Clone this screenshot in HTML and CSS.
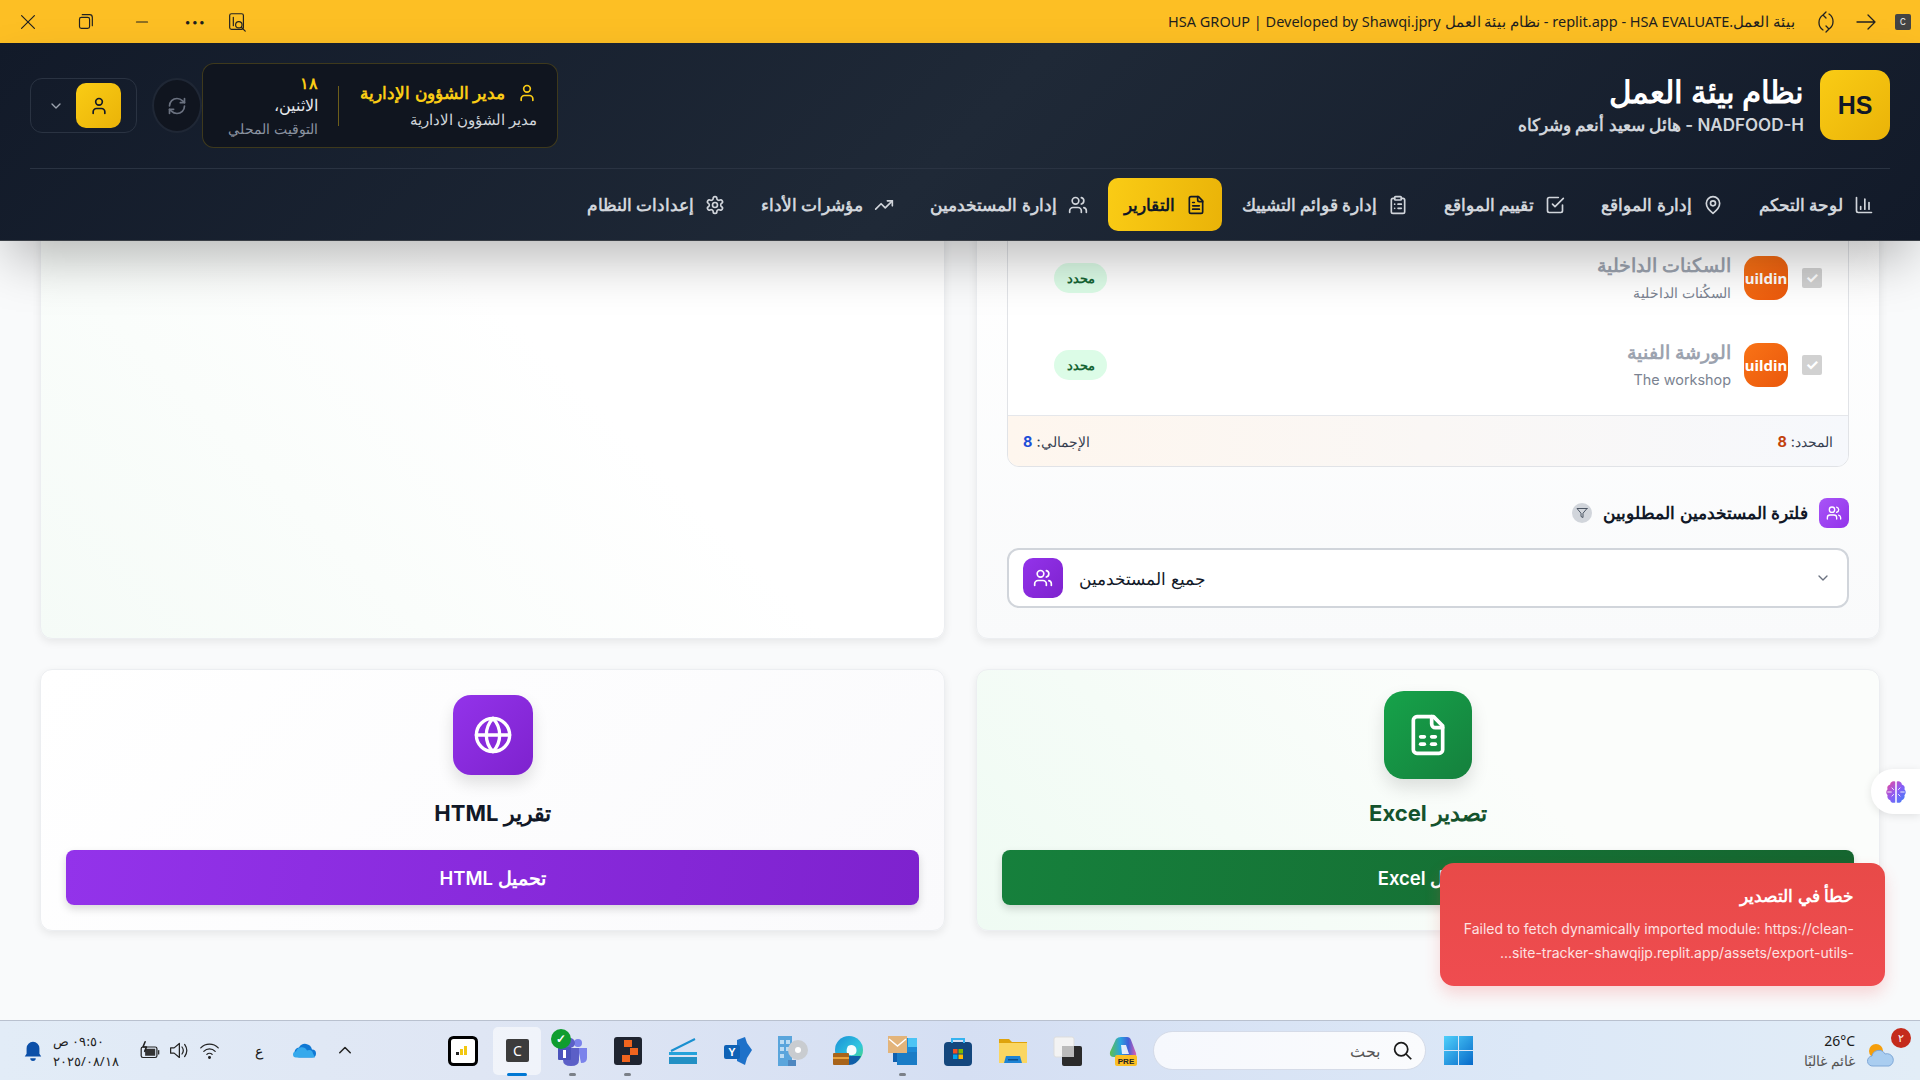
FILE: index.html
```html
<!DOCTYPE html>
<html lang="ar" dir="rtl">
<head>
    <meta charset="UTF-8">
    <title>نظام بيئة العمل</title>
    <link rel="stylesheet" href="styles.css">
</head>
<body>
    <svg class="sprite" xmlns="http://www.w3.org/2000/svg">
        <symbol id="i-chart" viewBox="0 0 24 24"><path d="M3 3v16a2 2 0 0 0 2 2h16"/><path d="M18 17V9"/><path d="M13 17V5"/><path d="M8 17v-3"/></symbol>
        <symbol id="i-pin" viewBox="0 0 24 24"><path d="M20 10c0 6-8 12-8 12s-8-6-8-12a8 8 0 0 1 16 0Z"/><circle cx="12" cy="10" r="3"/></symbol>
        <symbol id="i-check" viewBox="0 0 24 24"><path d="m9 11 3 3L22 4"/><path d="M21 12v7a2 2 0 0 1-2 2H5a2 2 0 0 1-2-2V5a2 2 0 0 1 2-2h11"/></symbol>
        <symbol id="i-clipboard" viewBox="0 0 24 24"><rect x="8" y="2" width="8" height="4" rx="1"/><path d="M16 4h2a2 2 0 0 1 2 2v14a2 2 0 0 1-2 2H6a2 2 0 0 1-2-2V6a2 2 0 0 1 2-2h2"/><path d="M12 11h4"/><path d="M12 16h4"/><path d="M8 11h.01"/><path d="M8 16h.01"/></symbol>
        <symbol id="i-file" viewBox="0 0 24 24"><path d="M15 2H6a2 2 0 0 0-2 2v16a2 2 0 0 0 2 2h12a2 2 0 0 0 2-2V7Z"/><path d="M14 2v4a2 2 0 0 0 2 2h4"/><path d="M10 9H8"/><path d="M16 13H8"/><path d="M16 17H8"/></symbol>
        <symbol id="i-users" viewBox="0 0 24 24"><path d="M16 21v-2a4 4 0 0 0-4-4H6a4 4 0 0 0-4 4v2"/><circle cx="9" cy="7" r="4"/><path d="M22 21v-2a4 4 0 0 0-3-3.87"/><path d="M16 3.13a4 4 0 0 1 0 7.75"/></symbol>
        <symbol id="i-trend" viewBox="0 0 24 24"><polyline points="22 7 13.5 15.5 8.5 10.5 2 17"/><polyline points="16 7 22 7 22 13"/></symbol>
        <symbol id="i-gear" viewBox="0 0 24 24"><path d="M12.22 2h-.44a2 2 0 0 0-2 2v.18a2 2 0 0 1-1 1.73l-.43.25a2 2 0 0 1-2 0l-.15-.08a2 2 0 0 0-2.73.73l-.22.38a2 2 0 0 0 .73 2.73l.15.1a2 2 0 0 1 1 1.72v.51a2 2 0 0 1-1 1.74l-.15.09a2 2 0 0 0-.73 2.73l.22.38a2 2 0 0 0 2.73.73l.15-.08a2 2 0 0 1 2 0l.43.25a2 2 0 0 1 1 1.73V20a2 2 0 0 0 2 2h.44a2 2 0 0 0 2-2v-.18a2 2 0 0 1 1-1.73l.43-.25a2 2 0 0 1 2 0l.15.08a2 2 0 0 0 2.73-.73l.22-.39a2 2 0 0 0-.73-2.73l-.15-.08a2 2 0 0 1-1-1.74v-.5a2 2 0 0 1 1-1.74l.15-.09a2 2 0 0 0 .73-2.73l-.22-.38a2 2 0 0 0-2.73-.73l-.15.08a2 2 0 0 1-2 0l-.43-.25a2 2 0 0 1-1-1.73V4a2 2 0 0 0-2-2z"/><circle cx="12" cy="12" r="3"/></symbol>
        <symbol id="i-user" viewBox="0 0 24 24"><path d="M19 21v-2a4 4 0 0 0-4-4H9a4 4 0 0 0-4 4v2"/><circle cx="12" cy="7" r="4"/></symbol>
        <symbol id="i-refresh" viewBox="0 0 24 24"><path d="M3 12a9 9 0 0 1 9-9 9.75 9.75 0 0 1 6.74 2.74L21 8"/><path d="M21 3v5h-5"/><path d="M21 12a9 9 0 0 1-9 9 9.75 9.75 0 0 1-6.74-2.74L3 16"/><path d="M8 16H3v5"/></symbol>
        <symbol id="i-chevron" viewBox="0 0 24 24"><path d="m6 9 6 6 6-6"/></symbol>
        <symbol id="i-sheet" viewBox="0 0 24 24"><path d="M15 2H6a2 2 0 0 0-2 2v16a2 2 0 0 0 2 2h12a2 2 0 0 0 2-2V7Z"/><path d="M14 2v4a2 2 0 0 0 2 2h4"/><path d="M8 13h2"/><path d="M14 13h2"/><path d="M8 17h2"/><path d="M14 17h2"/></symbol>
        <symbol id="i-globe" viewBox="0 0 24 24"><circle cx="12" cy="12" r="10"/><path d="M12 2a14.5 14.5 0 0 0 0 20 14.5 14.5 0 0 0 0-20"/><path d="M2 12h20"/></symbol>
        <symbol id="i-funnel" viewBox="0 0 24 24"><polygon points="22 3 2 3 10 12.46 10 19 14 21 14 12.46 22 3"/></symbol>
    </svg>

    <!-- browser window bar -->
    <div class="titlebar">
        <span class="tab-icon">c</span>
        <svg class="tb-icon" viewBox="0 0 24 24"><path d="M3 12h18M14 5l7 7-7 7"/></svg>
        <svg class="tb-icon tb-reload" viewBox="0 0 24 24"><path d="M9 5a9 9 0 0 0 0 15M15 19a9 9 0 0 0 0-15M12 2 9 5l3 3M12 22l3-3-3-3"/></svg>
        <span class="tb-title">HSA GROUP | Developed by Shawqi.jpry نظام بيئة العمل - replit.app - HSA EVALUATE.بيئة العمل</span>
        <div class="tb-controls">
            <svg class="tb-icon" viewBox="0 0 24 24"><rect x="4" y="3" width="15" height="17" rx="2"/><path d="M8 7v9"/><circle cx="14" cy="15" r="3.5"/><path d="m17 18 4 4"/></svg>
            <span class="tb-dots">&#8226;&#8226;&#8226;</span>
            <svg class="tb-icon" viewBox="0 0 24 24"><path d="M6 12h12"/></svg>
            <svg class="tb-icon" viewBox="0 0 24 24"><rect x="6" y="7" width="11" height="12" rx="2"/><path d="M9 4h8a3 3 0 0 1 3 3v9"/></svg>
            <svg class="tb-icon" viewBox="0 0 24 24"><path d="m5 5 14 14M19 5 5 19"/></svg>
        </div>
    </div>

    <header class="app-header">
        <div class="header-top">
            <div class="brand">
                <div class="brand-logo">HS</div>
                <div class="brand-text">
                    <h1>نظام بيئة العمل</h1>
                    <p>NADFOOD-H - هائل سعيد أنعم وشركاه</p>
                </div>
            </div>
            <div class="header-tools">
                <div class="info-box">
                    <div class="info-user">
                        <div class="info-name"><svg class="ico ico-20"><use href="#i-user"/></svg><span>مدير الشؤون الإدارية</span></div>
                        <div class="info-role">مدير الشؤون الادارية</div>
                    </div>
                    <div class="info-date">
                        <span class="date-num">١٨</span>
                        <span class="date-day">الاثنين،</span>
                        <span class="date-zone">التوقيت المحلي</span>
                    </div>
                </div>
                <div class="refresh-btn"><svg class="ico ico-20"><use href="#i-refresh"/></svg></div>
                <div class="user-chip">
                    <div class="user-btn"><svg class="ico ico-20"><use href="#i-user"/></svg></div>
                    <svg class="ico ico-16 chip-chevron"><use href="#i-chevron"/></svg>
                </div>
            </div>
        </div>
        <nav class="main-nav">
            <a class="nav-item"><svg class="ico ico-20"><use href="#i-chart"/></svg><span>لوحة التحكم</span></a>
            <a class="nav-item"><svg class="ico ico-20"><use href="#i-pin"/></svg><span>إدارة المواقع</span></a>
            <a class="nav-item"><svg class="ico ico-20"><use href="#i-check"/></svg><span>تقييم المواقع</span></a>
            <a class="nav-item"><svg class="ico ico-20"><use href="#i-clipboard"/></svg><span>إدارة قوائم التشييك</span></a>
            <a class="nav-item active"><svg class="ico ico-20"><use href="#i-file"/></svg><span>التقارير</span></a>
            <a class="nav-item"><svg class="ico ico-20"><use href="#i-users"/></svg><span>إدارة المستخدمين</span></a>
            <a class="nav-item"><svg class="ico ico-20"><use href="#i-trend"/></svg><span>مؤشرات الأداء</span></a>
            <a class="nav-item"><svg class="ico ico-20"><use href="#i-gear"/></svg><span>إعدادات النظام</span></a>
        </nav>
    </header>

    <main class="page">
        <div class="card-grid">
            <section class="card filter-card">
                <div class="list-box">
                    <div class="list-rows">
                        <div class="list-row">
                            <span class="row-check">&#10003;</span>
                            <div class="row-avatar">uildin</div>
                            <div class="row-text">
                                <div class="row-title">السكنات الداخلية</div>
                                <div class="row-sub">السكُنات الداخلية</div>
                            </div>
                            <span class="row-badge">محدد</span>
                        </div>
                        <div class="list-row">
                            <span class="row-check">&#10003;</span>
                            <div class="row-avatar">uildin</div>
                            <div class="row-text">
                                <div class="row-title">الورشة الفنية</div>
                                <div class="row-sub">The workshop</div>
                            </div>
                            <span class="row-badge">محدد</span>
                        </div>
                    </div>
                    <div class="list-summary">
                        <span>المحدد: <b class="num-red">8</b></span>
                        <span>الإجمالي: <b class="num-blue">8</b></span>
                    </div>
                </div>
                <div class="section-head">
                    <span class="section-icon"><svg class="ico ico-16"><use href="#i-users"/></svg></span>
                    <h3>فلترة المستخدمين المطلوبين</h3>
                    <span class="funnel"><svg class="ico ico-12"><use href="#i-funnel"/></svg></span>
                </div>
                <div class="select-box">
                    <svg class="ico ico-16 select-chevron"><use href="#i-chevron"/></svg>
                    <span class="select-label">جميع المستخدمين</span>
                    <span class="select-icon"><svg class="ico ico-20"><use href="#i-users"/></svg></span>
                </div>
            </section>
            <section class="card preview-card"></section>

            <section class="card export-card excel">
                <div class="export-icon"><svg class="ico ico-40"><use href="#i-sheet"/></svg></div>
                <h2>تصدير Excel</h2>
                <button class="export-btn">تحميل Excel</button>
            </section>
            <section class="card export-card html">
                <div class="export-icon"><svg class="ico ico-40"><use href="#i-globe"/></svg></div>
                <h2>تقرير HTML</h2>
                <button class="export-btn">تحميل HTML</button>
            </section>
        </div>
    </main>

    <div class="toast">
        <div class="toast-title">خطأ في التصدير</div>
        <div class="toast-body">Failed to fetch dynamically imported module: https://clean-<br>...site-tracker-shawqijp.replit.app/assets/export-utils-</div>
    </div>

    <div class="brain-tab">
        <svg viewBox="0 0 24 24" width="26" height="26">
            <defs><linearGradient id="brain" x1="0" y1="0" x2="1" y2="1"><stop offset="0" stop-color="#ec4899"/><stop offset=".5" stop-color="#8b5cf6"/><stop offset="1" stop-color="#3b82f6"/></linearGradient></defs>
            <path fill="url(#brain)" d="M11.3 2.5C9 1.5 6.8 3 6.6 5 4.5 5.4 3.4 7.6 4.2 9.5 2.6 11 2.6 13.5 4.2 15c-.7 2 .5 4.100 2.500 4.500.4 2.100 2.700 3.200 4.600 2.100ZM12.700 2.500c2.300-1 4.500.5 4.700 2.500 2.100.4 3.200 2.600 2.400 4.500 1.600 1.500 1.600 4 0 5.500.7 2-.5 4.100-2.500 4.500-.4 2.100-2.700 3.200-4.600 2.100Z"/>
            <path fill="none" stroke="#fff" stroke-width=".8" d="M4 12h4M8 8l2 2M8 16l2-2M20 12h-4M16 8l-2 2M16 16l-2-2"/>
        </svg>
    </div>

    <!-- windows taskbar, mirrored for the arabic locale -->
    <footer class="taskbar">
        <div class="tray-weather">
            <span class="weather-badge">٢</span>
            <svg class="weather-icon" viewBox="0 0 32 26"><circle cx="12" cy="9" r="7" fill="#f59e0b"/><path fill="#a9cdf0" stroke="#7fa8d8" d="M9 24a5 5 0 0 1-1-10 7 7 0 0 1 13-2 6 6 0 0 1 4 12Z"/></svg>
            <div class="weather-text">
                <span>26°C</span>
                <span class="weather-sub">غائم غالبًا</span>
            </div>
        </div>
        <svg class="start-icon" viewBox="0 0 29 29">
            <defs><linearGradient id="win" x1="0" y1="0" x2="1" y2="1"><stop offset="0" stop-color="#4fd0fb"/><stop offset="1" stop-color="#0669c9"/></linearGradient></defs>
            <path fill="url(#win)" d="M0 0h14v14H0zM15 0h14v14H15zM0 15h14v14H0zM15 15h14v14H15z"/>
        </svg>
        <div class="search-box">
            <svg class="search-glass" viewBox="0 0 24 24"><circle cx="10.500" cy="10.500" r="7.500"/><path d="m16 16 6 6"/></svg>
            <span>بحث</span>
        </div>
        <div class="app-icons">
            <div class="app-cell"><svg viewBox="0 0 30 30"><defs><linearGradient id="cop" x1="0" y1="0" x2="1" y2="0"><stop offset="0" stop-color="#5fc04a"/><stop offset=".4" stop-color="#2aa4e0"/><stop offset=".7" stop-color="#3f5fd8"/><stop offset="1" stop-color="#e05fb0"/></linearGradient></defs><path fill="url(#cop)" d="M8 3q2-2 5-2h6q3 0 4 3l5 13q1 4-3 4H6q-5 0-4-5Z"/><path fill="#fff" d="M13 9h5l3 9h-7Z" opacity=".85"/><rect x="7" y="19" width="22" height="11" rx="2" fill="#fbbf24"/><text x="18" y="28" class="pre-label">PRE</text></svg></div>
            <div class="app-cell"><svg viewBox="0 0 30 30"><rect x="1" y="1" width="20" height="20" rx="2" fill="#f3f3f3" stroke="#ddd"/><rect x="9" y="10" width="20" height="20" rx="2" fill="#2b2b2b"/><rect x="9" y="10" width="12" height="11" fill="#bbb"/></svg></div>
            <div class="app-cell"><svg viewBox="0 0 30 30"><path fill="#dfa30c" d="M1 3h10l3 3h15v6H1z"/><path fill="#fbd661" d="M1 7h28v20H1z"/><path fill="#1d83d4" d="M6 27l2-7h14l2 7z"/><path fill="#0d4f8a" d="M10 23h10v1.500H10z"/></svg></div>
            <div class="app-cell"><svg viewBox="0 0 30 30"><rect x="1" y="6" width="28" height="24" rx="4" fill="#14477d"/><path fill="none" stroke="#35b3f0" stroke-width="2" d="M9 7V3h12v4"/><path fill="#f25022" d="M10 13h4.500v4.500H10z"/><path fill="#7fba00" d="M15.500 13H20v4.500h-4.500z"/><path fill="#00a4ef" d="M10 18.500h4.500V23H10z"/><path fill="#ffb900" d="M15.500 18.500H20V23h-4.500z"/></svg></div>
            <div class="app-cell"><svg viewBox="0 0 30 30"><rect x="11" y="2" width="18" height="26" fill="#1d8ad6"/><rect x="20" y="2" width="9" height="9" fill="#4cc4f5"/><rect x="5" y="12" width="14" height="14" fill="#0f5fae"/><path fill="#1a7cc6" d="M9 16h20v13H9z"/><rect x="0" y="0" width="19" height="17" fill="#e3b47a"/><path fill="none" stroke="#fff" stroke-width="1.500" d="M1 3l8.500 7L18 3"/></svg><span class="run-dot"></span></div>
            <div class="app-cell"><svg viewBox="0 0 30 30"><defs><linearGradient id="edge" x1="0" y1="0" x2="1" y2="1"><stop offset="0" stop-color="#1b8fd6"/><stop offset=".6" stop-color="#2fc5e0"/><stop offset="1" stop-color="#4cd964"/></linearGradient></defs><circle cx="16" cy="14" r="14" fill="url(#edge)"/><path fill="#fff" d="M15 10c6-3 10 2 8 7-2 3-7 3-9 0-1-3 0-5 1-7z" opacity=".95"/><path fill="#0f5ea8" d="M4 20h24q-4 9-12 9-8 0-12-9z"/><rect x="0" y="17" width="16" height="12" rx="1" fill="#a8641b"/><path fill="#e9a23b" d="M0 21h16v2H0z"/></svg></div>
            <div class="app-cell"><svg viewBox="0 0 30 30"><rect x="0" y="0" width="14" height="30" fill="#5aa5dc"/><path fill="#bcdcf3" d="M2 4h4v4H2zM8 4h4v4H8zM2 11h4v4H2zM8 11h4v4H8zM2 18h4v4H2z"/><circle cx="20" cy="14" r="10" fill="#c9ccd0"/><circle cx="20" cy="14" r="3" fill="#fff"/><path fill="#4e87c0" d="M10 24h8v6h-8z"/></svg></div>
            <div class="app-cell"><svg viewBox="0 0 30 30"><path fill="#1e71c9" d="M14 4 22 1l2 6 5 7-5 8-2 7-8-4Z"/><rect x="1" y="9" width="16" height="14" rx="2" fill="#0f62b6"/><text x="9" y="20" class="yam-label">Y</text></svg></div>
            <div class="app-cell"><svg viewBox="0 0 30 30"><path fill="none" stroke="#1a90d0" stroke-width="2" d="M3 15 27 3"/><path fill="#24a2da" d="M1 16h28v3H1z"/><path fill="#2390c4" d="M1 21h28v7H1z"/></svg></div>
            <div class="app-cell"><svg viewBox="0 0 30 30"><rect x="1" y="1" width="28" height="28" rx="3" fill="#1f2430"/><path fill="#f0641e" d="M11 4h8v7h-8zM17 12h8v7h-8zM9 19h8v7H9z"/></svg><span class="run-dot"></span></div>
            <div class="app-cell"><svg viewBox="0 0 30 30"><circle cx="20" cy="7" r="4" fill="#7b83eb"/><circle cx="12" cy="7" r="5" fill="#5b5fc7"/><path fill="#7b83eb" d="M20 12h9v10q0 5-6 5z"/><path fill="#5b5fc7" d="M5 12h16v12q0 6-8 6-8 0-8-6z"/><rect x="0" y="11" width="13" height="13" rx="1" fill="#4b53bc"/><path fill="#fff" d="M5 14h3v8H5z"/></svg><span class="check-badge">&#10003;</span><span class="run-dot"></span></div>
            <div class="app-cell current"><span class="c-tile">C</span><span class="run-bar"></span></div>
            <div class="app-cell"><svg viewBox="0 0 30 30"><rect x="1.500" y="1.500" width="27" height="27" rx="4" fill="#fff" stroke="#000" stroke-width="3"/><path fill="#f2c811" d="M16 10h3v9h-3zM12 13h3v6h-3z"/><path fill="#222" d="M8 16h3v3H8z"/></svg></div>
        </div>
        <div class="tray">
            <svg class="tray-icon tray-chevron" viewBox="0 0 24 24"><path d="m5 15 7-7 7 7"/></svg>
            <svg class="tray-icon tray-cloud" viewBox="0 0 24 16"><path fill="#0f78d4" d="M7 15a5 5 0 0 1-1-10 7 7 0 0 1 13 2 4 4 0 0 1 0 8Z"/><path fill="#36a9ec" d="M3 15a3 3 0 0 1 0-6 6 6 0 0 1 11-1 4 4 0 0 1 6 3l2 4Z"/></svg>
            <span class="tray-lang">ع</span>
            <svg class="tray-icon tray-wifi" viewBox="0 0 24 24"><path d="M2 9a14 14 0 0 1 20 0M5.500 13a9 9 0 0 1 13 0M9 16.500a4 4 0 0 1 6 0"/><circle cx="12" cy="20" r="1" fill="#222"/></svg>
            <svg class="tray-icon tray-sound" viewBox="0 0 24 24"><path d="M3 9h4l6-5v16l-6-5H3zM16 8q3 4 0 8M19 5q5 7 0 14"/></svg>
            <svg class="tray-icon tray-battery" viewBox="0 0 24 24"><rect x="2.500" y="8" width="18" height="12" rx="2"/><rect x="7" y="10" width="11.500" height="8" fill="#333" stroke="none"/><path d="M22.500 12v4"/><path d="M7 2 4.500 8h4l-2 5" stroke-width="1.800"/></svg>
            <div class="clock">
                <span>٠٩:٥٠ ص</span>
                <span>٢٠٢٥/٠٨/١٨</span>
            </div>
            <svg class="tray-bell" viewBox="0 0 24 24"><path fill="#0b4fa8" d="M12 2a7 7 0 0 0-7 7v6l-2 3h18l-2-3V9a7 7 0 0 0-7-7ZM9 20a3 3 0 0 0 6 0Z"/></svg>
        </div>
    </footer>
</body>
</html>
```

FILE: styles.css
```css
* {
    box-sizing: border-box;
}

html, body {
    margin: 0;
    padding: 0;
    height: 100%;
}

body {
    width: 1920px;
    height: 1080px;
    overflow: hidden;
    display: flex;
    flex-direction: column;
    position: relative;
    font-family: Inter, sans-serif;
    background-color: #f9fafb;
    color: #111827;
}

.sprite {
    display: none;
}

.ico {
    fill: none;
    stroke: currentColor;
    stroke-width: 2;
    stroke-linecap: round;
    stroke-linejoin: round;
    flex-shrink: 0;
}

.ico-12 { width: 12px; height: 12px; }
.ico-16 { width: 16px; height: 16px; }
.ico-20 { width: 20px; height: 20px; }
.ico-40 { width: 40px; height: 40px; }

/* browser bar */
.titlebar {
    height: 43px;
    flex-shrink: 0;
    display: flex;
    align-items: center;
    background-color: #fdbf24;
    padding: 0 9px 0 17px;
    color: #1f1f1f;
}

.tab-icon {
    width: 16px;
    height: 16px;
    background-color: #444;
    color: #ddd;
    border-radius: 2px;
    font-size: 11px;
    line-height: 15px;
    text-align: center;
    margin-left: 17px;
}

.tb-icon {
    width: 24px;
    height: 24px;
    fill: none;
    stroke: #222;
    stroke-width: 1.3;
    stroke-linecap: round;
    stroke-linejoin: round;
    margin-left: 16px;
}

.tb-reload {
    margin-left: 19px;
}

.tb-title {
    font-family: "Noto Sans", sans-serif;
    font-size: 14.5px;
    line-height: 18px;
    margin-top: -2px;
    white-space: nowrap;
    direction: ltr;
}

.tb-controls {
    margin-right: auto;
    display: flex;
    align-items: center;
    gap: 35px;
}

.tb-controls .tb-icon {
    margin: 0;
    width: 22px;
    height: 22px;
}

.tb-dots {
    font-size: 11px;
    letter-spacing: 1px;
    width: 12px;
    margin-right: -15px;
    margin-left: 6px;
    white-space: nowrap;
}

/* app header */
.app-header {
    height: 198px;
    flex-shrink: 0;
    padding: 0 30px;
    background: linear-gradient(135deg, #121a29 0%, #1f2937 50%, #121a29 100%);
    position: relative;
    z-index: 5;
    box-shadow: 0 25px 50px -8px rgba(0, 0, 0, 0.28);
    border-bottom: 1px solid #3a3f46;
}

.header-top {
    height: 126px;
    padding-top: 20px;
    display: flex;
    justify-content: space-between;
    align-items: flex-start;
    border-bottom: 1px solid #2a3342;
}

.brand {
    display: flex;
    align-items: center;
    gap: 16px;
    padding-top: 7px;
}

.brand-logo {
    width: 70px;
    height: 70px;
    border-radius: 14px;
    background: linear-gradient(135deg, #facc15, #eab308);
    color: #111827;
    font-family: "Liberation Sans", sans-serif;
    font-weight: 700;
    font-size: 25px;
    display: flex;
    align-items: center;
    justify-content: center;
}

.brand-text h1 {
    margin: 0;
    color: #fff;
    font-size: 31px;
    line-height: 40px;
    font-weight: 700;
}

.brand-text p {
    margin: 0;
    color: #d1d5db;
    font-size: 17px;
    line-height: 26px;
    font-weight: 600;
}

.header-tools {
    display: flex;
    align-items: center;
    height: 85px;
}

.info-box {
    width: 356px;
    height: 85px;
    display: flex;
    align-items: center;
    padding: 0 20px;
    border: 1px solid rgba(250, 204, 21, 0.2);
    border-radius: 12px;
    background-color: #10151f;
}

.info-user {
    width: 199px;
    padding-left: 20px;
    border-left: 1px solid rgba(250, 204, 21, 0.4);
    height: 40px;
    display: flex;
    flex-direction: column;
    justify-content: center;
    gap: 3px;
}

.info-name {
    display: flex;
    align-items: center;
    gap: 12px;
    color: #facc15;
    font-size: 17.3px;
    line-height: 26px;
    font-weight: 600;
    white-space: nowrap;
}

.info-role {
    color: #d1d5db;
    font-size: 14.6px;
    line-height: 22px;
    white-space: nowrap;
}

.info-date {
    padding-right: 20px;
    display: flex;
    flex-direction: column;
    gap: 3px;
    font-size: 14.3px;
    line-height: 20px;
    white-space: nowrap;
}

.date-num { color: #facc15; font-weight: 700; font-size: 16px; }
.date-day { color: #e5e7eb; font-size: 15.5px; }
.date-zone { color: #8b93a1; }

.refresh-btn {
    width: 50px;
    height: 55px;
    border-radius: 50%;
    border: 2px solid #1f2735;
    background-color: #10151f;
    color: #6b7280;
    display: flex;
    align-items: center;
    justify-content: center;
    margin-left: 15px;
}

.user-chip {
    width: 107px;
    height: 55px;
    border: 1px solid #2a3342;
    border-radius: 12px;
    display: flex;
    align-items: center;
    padding: 0 15px;
    gap: 12px;
}

.user-btn {
    width: 45px;
    height: 45px;
    border-radius: 10px;
    background: linear-gradient(135deg, #facc15, #eab308);
    color: #111827;
    display: flex;
    align-items: center;
    justify-content: center;
}

.chip-chevron {
    color: #9ca3af;
}

.main-nav {
    display: flex;
    gap: 4px;
    padding-top: 9px;
}

.nav-item {
    height: 53px;
    padding: 0 16px;
    display: flex;
    align-items: center;
    gap: 11px;
    border-radius: 10px;
    color: #d1d5db;
    font-size: 17px;
    font-weight: 600;
    white-space: nowrap;
}

.nav-item.active {
    background: linear-gradient(100deg, #facc15, #eab308);
    color: #111827;
}

/* page body */
.page {
    flex: 1;
    min-height: 0;
    overflow: hidden;
    display: flex;
    flex-direction: column;
    justify-content: flex-end;
    padding: 0 40px 89px 40px;
}

.card-grid {
    display: grid;
    grid-template-columns: 904px 905px;
    column-gap: 31px;
    row-gap: 30px;
}

.card {
    background-color: #fff;
    border: 1px solid #eceef1;
    border-radius: 12px;
    box-shadow: 0 3px 8px rgba(0, 0, 0, 0.08);
}

.filter-card {
    padding: 0 30px 30px;
    background: linear-gradient(180deg, #fff, #f9fafb);
}

.preview-card {
    background: linear-gradient(45deg, #f5fbf7, #fff 60%);
}

.list-box {
    border: 1px solid #e1e3e7;
    border-radius: 0 0 12px 12px;
    overflow: hidden;
}

.list-rows {
    display: flex;
    flex-direction: column;
    gap: 16px;
    padding: 15px 26px 15px 46px;
    background-color: #fff;
}

.list-row {
    height: 71px;
    display: flex;
    align-items: center;
}

.row-check {
    width: 20px;
    height: 20px;
    background-color: #d1d1d1;
    border-radius: 2px;
    color: #fff;
    font-size: 15px;
    font-weight: 700;
    line-height: 20px;
    text-align: center;
    margin-left: 14px;
}

.row-avatar {
    width: 44px;
    height: 44px;
    border-radius: 14px;
    background: linear-gradient(135deg, #f97316, #ea580c);
    color: #fff;
    font-family: "Noto Sans", sans-serif;
    font-size: 15px;
    font-weight: 700;
    display: flex;
    justify-content: center;
    align-items: center;
    margin-left: 13px;
    direction: ltr;
}

.row-text {
    flex: 1;
}

.row-title {
    color: #9ca3af;
    font-size: 19px;
    font-weight: 600;
    line-height: 30px;
}

.row-sub {
    color: #7b8391;
    font-size: 14.4px;
    line-height: 24px;
}

.row-badge {
    width: 53px;
    height: 30px;
    border-radius: 15px;
    background-color: #dcfce7;
    color: #166534;
    font-size: 13px;
    font-weight: 700;
    display: flex;
    align-items: center;
    justify-content: center;
}

.list-summary {
    height: 51px;
    display: flex;
    align-items: center;
    justify-content: space-between;
    padding: 0 15px;
    font-size: 14.4px;
    color: #374151;
    border-top: 1px solid #e5e7eb;
    background: linear-gradient(90deg, #fef6ee, #f6f8fc);
}

.num-red { color: #c2410c; }
.num-blue { color: #1d4ed8; }

.section-head {
    display: flex;
    align-items: center;
    gap: 11px;
    margin-top: 31px;
}

.section-head h3 {
    margin: 0;
    font-size: 17px;
    font-weight: 600;
    color: #111827;
}

.section-icon {
    width: 30px;
    height: 30px;
    border-radius: 8px;
    background: linear-gradient(135deg, #a855f7, #9333ea);
    color: #fff;
    display: flex;
    align-items: center;
    justify-content: center;
}

.funnel {
    width: 20px;
    height: 20px;
    border-radius: 50%;
    background-color: #d1d5db;
    color: #4b5563;
    display: flex;
    align-items: center;
    justify-content: center;
}

.select-box {
    margin-top: 20px;
    height: 60px;
    border: 2px solid #d1d5db;
    border-radius: 12px;
    background-color: #fff;
    display: flex;
    align-items: center;
    padding: 0 16px 0 14px;
}

.select-chevron {
    color: #6b7280;
}

.select-label {
    margin-right: auto;
    margin-left: 16px;
    font-size: 17.4px;
    font-weight: 500;
}

.select-icon {
    width: 40px;
    height: 40px;
    border-radius: 10px;
    background: linear-gradient(135deg, #9333ea, #7e22ce);
    color: #fff;
    display: flex;
    align-items: center;
    justify-content: center;
}

.export-card {
    height: 262px;
    padding: 25px;
    display: flex;
    flex-direction: column;
    align-items: center;
}

.export-card.excel {
    background: linear-gradient(45deg, #effbf3, #fbfdfb 60%);
}

.export-card.html {
    background: linear-gradient(135deg, #fff, #fafafc);
}

.export-icon {
    width: 80px;
    height: 80px;
    border-radius: 18px;
    color: #fff;
    display: flex;
    align-items: center;
    justify-content: center;
    box-shadow: 0 8px 16px rgba(0, 0, 0, 0.12);
}

.excel .export-icon {
    background: linear-gradient(135deg, #16a34a, #15803d);
    transform: scale(1.1);
}

.html .export-icon {
    background: linear-gradient(135deg, #9333ea, #7e22ce);
}

.export-card h2 {
    margin: 20px 0 0;
    font-size: 22px;
    line-height: 36px;
    font-weight: 700;
    color: #111827;
}

.excel h2 {
    color: #14532d;
}

.export-btn {
    margin-top: 19px;
    width: 100%;
    height: 55px;
    border: none;
    border-radius: 8px;
    color: #fff;
    font-family: inherit;
    font-size: 18.5px;
    font-weight: 600;
    box-shadow: 0 4px 8px rgba(0, 0, 0, 0.15);
}

.excel .export-btn {
    background: linear-gradient(100deg, #16803c, #15652f);
}

.html .export-btn {
    background: linear-gradient(100deg, #9333ea, #7e22ce);
}

/* floating */
.toast {
    position: absolute;
    top: 863px;
    left: 1440px;
    width: 445px;
    height: 123px;
    padding: 22px 31px 0 22px;
    border-radius: 14px;
    background: linear-gradient(180deg, #e84a48, #ef4c50);
    color: #fff;
    z-index: 10;
    box-shadow: 0 8px 16px rgba(239, 68, 68, 0.2);
}

.toast-title {
    font-size: 17px;
    font-weight: 600;
    line-height: 22px;
}

.toast-body {
    margin-top: 10px;
    font-size: 14px;
    line-height: 24px;
    color: #fde2e2;
    white-space: nowrap;
    direction: ltr;
    text-align: right;
}

.brain-tab {
    position: absolute;
    top: 769px;
    left: 1871px;
    width: 49px;
    height: 45px;
    background-color: #fff;
    border-radius: 22px 0 0 22px;
    box-shadow: 0 2px 8px rgba(0, 0, 0, 0.1);
    display: flex;
    align-items: center;
    justify-content: center;
    z-index: 4;
}

/* taskbar */
.taskbar {
    height: 60px;
    flex-shrink: 0;
    display: flex;
    align-items: center;
    padding: 0 8px 0 20px;
    border-top: 1px solid #b9c1cf;
    background: linear-gradient(90deg, #e2ecf7, #dfe6f4 25%, #d5dff3 50%, #dce8f7 80%, #e2edf7);
    position: relative;
    font-family: "Noto Sans", sans-serif;
}

.tray-weather {
    display: flex;
    align-items: center;
    width: 439px;
    flex-shrink: 0;
    position: relative;
}

.weather-badge {
    position: absolute;
    top: -3px;
    right: 1px;
    width: 20px;
    height: 20px;
    border-radius: 50%;
    background-color: #c42b1c;
    color: #fff;
    font-size: 11px;
    line-height: 20px;
    text-align: center;
    z-index: 1;
}

.weather-icon {
    width: 32px;
    height: 26px;
    margin: 8px 16px 0 9px;
}

.weather-text {
    display: flex;
    flex-direction: column;
    font-size: 14px;
    line-height: 20px;
    color: #1a1a1a;
}

.weather-sub {
    color: #555;
    font-size: 13.5px;
}

.start-icon {
    width: 29px;
    height: 29px;
    flex-shrink: 0;
    margin-left: 18px;
}

.search-box {
    width: 273px;
    height: 39px;
    flex-shrink: 0;
    border-radius: 20px;
    background: linear-gradient(90deg, #f6f8fd, #fafbfd);
    border: 1px solid #d5dbe8;
    display: flex;
    align-items: center;
    padding: 0 12px;
    gap: 12px;
    font-size: 16px;
    color: #555;
    margin-left: 3px;
}

.search-glass {
    width: 21px;
    height: 21px;
    fill: none;
    stroke: #1a1a1a;
    stroke-width: 2;
}

.app-icons {
    display: flex;
    width: 715px;
    flex-shrink: 0;
}

.app-cell {
    width: 55px;
    height: 60px;
    display: flex;
    align-items: center;
    justify-content: center;
    position: relative;
}

.app-cell svg {
    width: 30px;
    height: 30px;
}

.app-cell.current::before {
    content: "";
    position: absolute;
    top: 6px;
    left: 3px;
    width: 48px;
    height: 48px;
    border-radius: 5px;
    background-color: rgba(255, 255, 255, 0.55);
}

.c-tile {
    position: relative;
    width: 23px;
    height: 23px;
    border-radius: 2px;
    background-color: #3c3c3c;
    color: #fff;
    font-size: 14px;
    line-height: 23px;
    text-align: center;
}

.run-bar {
    position: absolute;
    bottom: 5px;
    left: 17px;
    width: 20px;
    height: 3px;
    border-radius: 2px;
    background-color: #0078d4;
}

.run-dot {
    position: absolute;
    bottom: 5px;
    left: 24px;
    width: 7px;
    height: 3px;
    border-radius: 2px;
    background-color: #7b8088;
}

.check-badge {
    position: absolute;
    top: 8px;
    right: 29px;
    width: 20px;
    height: 20px;
    border-radius: 50%;
    background-color: #0f9d2f;
    color: #fff;
    font-size: 12px;
    font-weight: 700;
    line-height: 20px;
    text-align: center;
}

.pre-label {
    font-family: "Liberation Sans", sans-serif;
    font-size: 8px;
    font-weight: 700;
    text-anchor: middle;
    direction: ltr;
    fill: #222;
}

.yam-label {
    font-family: "Liberation Sans", sans-serif;
    font-size: 11px;
    font-weight: 700;
    text-anchor: middle;
    direction: ltr;
    fill: #fff;
}

.tray {
    display: flex;
    align-items: center;
    flex: 1;
    padding-right: 81px;
}

.tray-icon {
    width: 21px;
    height: 21px;
    fill: none;
    stroke: #222;
    stroke-width: 1.400;
    stroke-linecap: round;
    stroke-linejoin: round;
}

.tray-chevron {
    stroke-width: 2;
    width: 18px;
}

.tray-cloud {
    stroke: none;
    width: 24px;
    margin-right: 19px;
}

.tray-lang {
    font-size: 14px;
    color: #222;
    width: 10px;
    margin-right: 30px;
}

.tray-wifi { margin-right: 33px; }
.tray-sound { margin-right: 10px; }
.tray-battery { margin-right: 8px; }

.clock {
    display: flex;
    flex-direction: column;
    align-items: flex-end;
    font-size: 13px;
    line-height: 20px;
    color: #222;
    width: 65px;
    margin-right: 21px;
    white-space: nowrap;
}

.tray-bell {
    width: 22px;
    height: 22px;
    margin-right: 9px;
}
```
